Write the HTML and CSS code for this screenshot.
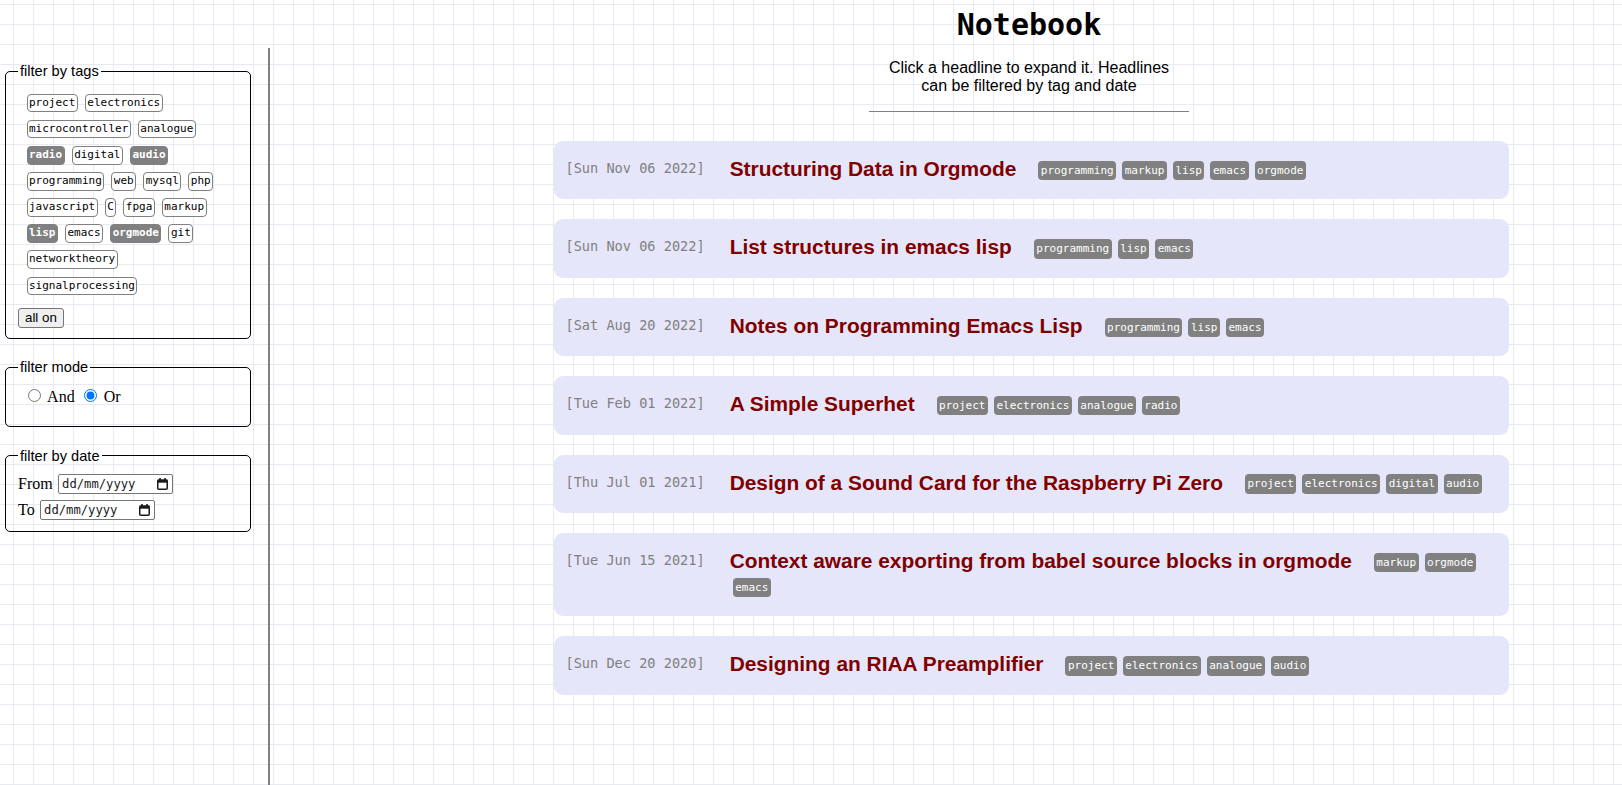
FILE: index.html
```html
<!DOCTYPE html>
<html lang="en">
<head>
<meta charset="utf-8">
<title>Notebook</title>
<link rel="stylesheet" href="styles.css">
</head>
<body>
<aside class="sidebar">
  <fieldset class="box">
    <legend class="legend">filter by tags</legend>
    <div class="taglist"><span class="ftag">project</span><span class="ftag">electronics</span><span class="ftag">microcontroller</span><span class="ftag">analogue</span><span class="ftag on">radio</span><span class="ftag">digital</span><span class="ftag on">audio</span><span class="ftag">programming</span><span class="ftag">web</span><span class="ftag">mysql</span><span class="ftag">php</span><span class="ftag">javascript</span><span class="ftag">C</span><span class="ftag">fpga</span><span class="ftag">markup</span><span class="ftag on">lisp</span><span class="ftag">emacs</span><span class="ftag on">orgmode</span><span class="ftag">git</span><span class="ftag">networktheory</span><span class="ftag">signalprocessing</span></div>
    <button class="btn" type="button">all on</button>
  </fieldset>
  <fieldset class="box box-mode">
    <legend class="legend">filter mode</legend>
    <div class="modes"><input type="radio" name="mode" id="and"> And <input type="radio" name="mode" id="or" checked> Or</div>
  </fieldset>
  <fieldset class="box box-date">
    <legend class="legend">filter by date</legend>
    <div class="daterows">
      <div class="daterow"><span class="dlabel">From</span><span class="dateinput"><span class="dtext">dd/mm/yyyy</span><svg class="cal" width="11" height="12" viewBox="0 0 11 12"><rect x="0.75" y="2.25" width="9.5" height="9" rx="1" fill="none" stroke="#1a1a1a" stroke-width="1.5"/><rect x="0.5" y="1.5" width="10" height="3.2" fill="#1a1a1a"/><rect x="2.2" y="0" width="1.6" height="2.5" fill="#1a1a1a"/><rect x="7.2" y="0" width="1.6" height="2.5" fill="#1a1a1a"/></svg></span></div>
      <div class="daterow"><span class="dlabel">To</span><span class="dateinput"><span class="dtext">dd/mm/yyyy</span><svg class="cal" width="11" height="12" viewBox="0 0 11 12"><rect x="0.75" y="2.25" width="9.5" height="9" rx="1" fill="none" stroke="#1a1a1a" stroke-width="1.5"/><rect x="0.5" y="1.5" width="10" height="3.2" fill="#1a1a1a"/><rect x="2.2" y="0" width="1.6" height="2.5" fill="#1a1a1a"/><rect x="7.2" y="0" width="1.6" height="2.5" fill="#1a1a1a"/></svg></span></div>
    </div>
  </fieldset>
</aside>
<main class="main">
  <header class="header">
    <h1 class="heading">Notebook</h1>
    <p class="intro">Click a headline to expand it. Headlines can be filtered by tag and date</p>
    <hr class="rule">
  </header>
  <div class="cards">
    <div class="card"><span class="date">[Sun Nov 06 2022]</span><div class="head"><span class="title">Structuring Data in Orgmode</span><span class="tag">programming</span><span class="tag">markup</span><span class="tag">lisp</span><span class="tag">emacs</span><span class="tag">orgmode</span></div></div>
    <div class="card"><span class="date">[Sun Nov 06 2022]</span><div class="head"><span class="title">List structures in emacs lisp</span><span class="tag">programming</span><span class="tag">lisp</span><span class="tag">emacs</span></div></div>
    <div class="card"><span class="date">[Sat Aug 20 2022]</span><div class="head"><span class="title">Notes on Programming Emacs Lisp</span><span class="tag">programming</span><span class="tag">lisp</span><span class="tag">emacs</span></div></div>
    <div class="card"><span class="date">[Tue Feb 01 2022]</span><div class="head"><span class="title">A Simple Superhet</span><span class="tag">project</span><span class="tag">electronics</span><span class="tag">analogue</span><span class="tag">radio</span></div></div>
    <div class="card"><span class="date">[Thu Jul 01 2021]</span><div class="head"><span class="title">Design of a Sound Card for the Raspberry Pi Zero</span><span class="tag">project</span><span class="tag">electronics</span><span class="tag">digital</span><span class="tag">audio</span></div></div>
    <div class="card"><span class="date">[Tue Jun 15 2021]</span><div class="head"><span class="title">Context aware exporting from babel source blocks in orgmode</span><span class="tag">markup</span><span class="tag">orgmode</span><span class="tag">emacs</span></div></div>
    <div class="card"><span class="date">[Sun Dec 20 2020]</span><div class="head"><span class="title">Designing an RIAA Preamplifier</span><span class="tag">project</span><span class="tag">electronics</span><span class="tag">analogue</span><span class="tag">audio</span></div></div>
  </div>
</main>
</body>
</html>
```
FILE: styles.css
```css
html {
  background-color: #ffffff;
  background-image:
    linear-gradient(to right, #e9e9f1 1px, transparent 1px),
    linear-gradient(to bottom, #e9e9f1 1px, transparent 1px);
  background-size: 20px 20px;
  background-position: 13px 4px;
}

body {
  margin: 0;
  display: flex;
  min-height: 100vh;
  overflow: hidden;
  font-family: "Liberation Serif", serif;
  font-size: 16px;
  color: #000;
}

.sidebar {
  flex: none;
  width: 270px;
  box-sizing: border-box;
  height: calc(100vh - 48px);
  margin-top: 48px;
  padding-top: 15px;
  border-right: 2px solid #808080;
}

.box {
  margin: 0 17px 20px 5px;
  padding: 0.35em 0.75em 0.625em;
  border: 1px solid #000;
  border-radius: 5px;
  font-family: "Liberation Serif", serif;
  font-size: 16px;
  min-width: 0;
}

.box-mode {
  margin-bottom: 21px;
}

.legend {
  font-family: "Liberation Sans", Arial, sans-serif;
  font-size: 14.6px;
  padding: 0 2px;
}

.taglist {
  display: flex;
  flex-wrap: wrap;
  padding: 5.5px 5px 9.5px;
}

.ftag {
  display: block;
  margin: 3.8px 3.5px;
  padding: 0 1.5px;
  border: 1px solid #808080;
  border-radius: 4px;
  background: #fff;
  font-family: "DejaVu Sans Mono", monospace;
  font-size: 11px;
  line-height: 16.5px;
  color: #000;
}

.ftag.on {
  background: #808080;
  color: #fff;
  font-weight: bold;
}

.btn {
  display: block;
  margin: 0;
  padding: 1px 6px;
  font-family: "Liberation Sans", Arial, sans-serif;
  font-size: 13.33px;
  line-height: 16px;
  color: #000;
  background: #efefef;
  border: 1px solid #767676;
  border-radius: 3px;
}

.modes {
  padding: 5px 0 10px 5px;
}

.modes input {
  margin: 3px 3px 0 5px;
}

.daterows {
  display: flex;
  flex-direction: column;
  gap: 6px;
  padding-top: 4.5px;
  padding-bottom: 0.5px;
}

.daterow {
  display: flex;
  align-items: center;
  height: 20px;
  gap: 5px;
}

.dateinput {
  display: inline-flex;
  align-items: center;
  justify-content: space-between;
  width: 115px;
  height: 20px;
  box-sizing: border-box;
  padding: 0 3.6px 0 3.4px;
  border: 1px solid #767676;
  border-radius: 2px;
  background: #fff;
}

.dtext {
  font-family: "DejaVu Sans Mono", monospace;
  font-size: 12.2px;
  color: #1a1a1a;
}

.cal {
  display: block;
}

.main {
  flex: 1;
  display: flex;
  flex-direction: column;
  align-items: center;
  padding: 7px 0 0 170px;
}

.header {
  display: flex;
  flex-direction: column;
  align-items: center;
  margin-right: 4px;
}

.heading {
  margin: 0;
  font-family: "DejaVu Sans Mono", monospace;
  font-weight: bold;
  font-size: 30px;
  line-height: 35px;
}

.intro {
  margin: 17px 0 0;
  max-width: 290px;
  text-align: center;
  font-family: "Liberation Sans", Arial, sans-serif;
  font-size: 16px;
}

.rule {
  width: 320px;
  margin: 16px 0 0;
  border: 0;
  border-top: 1px solid #808080;
  height: 0;
}

.cards {
  margin-top: 29px;
  display: flex;
  flex-direction: column;
  gap: 20px;
}

.card {
  display: flex;
  align-items: flex-start;
  width: 955px;
  box-sizing: border-box;
  padding: 15px 12px 18.4px;
  background: #e6e6fa;
  border-radius: 9px;
}

.date {
  flex: none;
  margin-right: 25px;
  font-family: "DejaVu Sans Mono", monospace;
  font-size: 13.6px;
  line-height: 24px;
  color: #808080;
}

.head {
  flex: 1;
  font-family: "Liberation Sans", Arial, sans-serif;
  font-weight: bold;
  font-size: 20.9px;
  line-height: 25px;
}

.title {
  margin-right: 19px;
  color: #800000;
}

.tag {
  display: inline-block;
  vertical-align: middle;
  margin: 0 3px;
  padding: 0 2.5px;
  border-radius: 4px;
  background: #808080;
  color: #fff;
  font-family: "DejaVu Sans Mono", monospace;
  font-weight: normal;
  font-size: 11px;
  line-height: 19.5px;
}
```
